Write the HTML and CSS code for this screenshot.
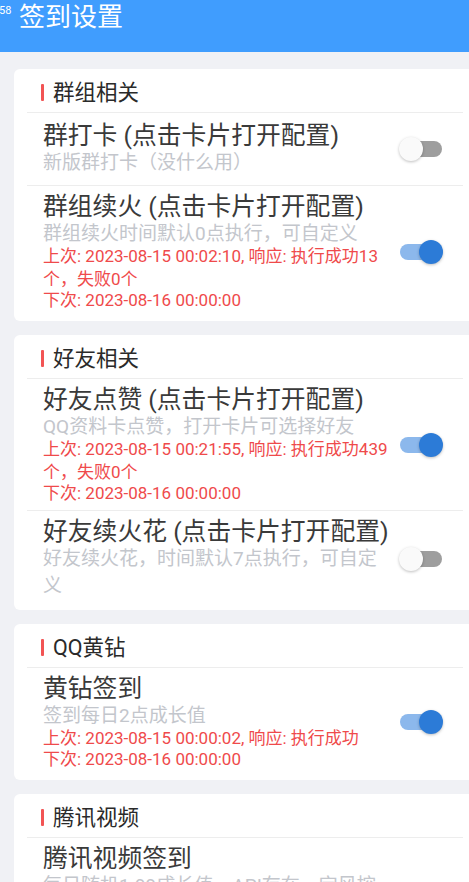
FILE: index.html
```html
<!DOCTYPE html>
<html lang="zh-CN">
<head>
<meta charset="utf-8">
<meta name="viewport" content="width=device-width, initial-scale=1">
<title>签到设置</title>
<link rel="stylesheet" href="styles.css">
</head>
<body>

<div class="topBar">
    <span class="clock">58</span>
    <h1 class="pageTitle">签到设置</h1>
</div>

<div class="page">

    <div class="card">
        <div class="cardHead"><span class="mark"></span>群组相关</div>

        <div class="item">
            <div class="itemText">
                <div class="itemTitle">群打卡 (点击卡片打开配置)</div>
                <div class="itemSub">新版群打卡（没什么用）</div>
            </div>
            <span class="switch"><span class="knob"></span></span>
        </div>

        <div class="item">
            <div class="itemText">
                <div class="itemTitle">群组续火 (点击卡片打开配置)</div>
                <div class="itemSub">群组续火时间默认0点执行，可自定义</div>
                <div class="itemLog">上次: 2023-08-15 00:02:10, 响应: 执行成功13个，失败0个</div>
                <div class="itemLog">下次: 2023-08-16 00:00:00</div>
            </div>
            <span class="switch on"><span class="knob"></span></span>
        </div>
    </div>

    <div class="card">
        <div class="cardHead"><span class="mark"></span>好友相关</div>

        <div class="item">
            <div class="itemText">
                <div class="itemTitle">好友点赞 (点击卡片打开配置)</div>
                <div class="itemSub">QQ资料卡点赞，打开卡片可选择好友</div>
                <div class="itemLog">上次: 2023-08-15 00:21:55, 响应: 执行成功439个，失败0个</div>
                <div class="itemLog">下次: 2023-08-16 00:00:00</div>
            </div>
            <span class="switch on"><span class="knob"></span></span>
        </div>

        <div class="item">
            <div class="itemText">
                <div class="itemTitle">好友续火花 (点击卡片打开配置)</div>
                <div class="itemSub">好友续火花，时间默认7点执行，可自定义</div>
            </div>
            <span class="switch"><span class="knob"></span></span>
        </div>
    </div>

    <div class="card">
        <div class="cardHead"><span class="mark"></span>QQ黄钻</div>

        <div class="item">
            <div class="itemText">
                <div class="itemTitle">黄钻签到</div>
                <div class="itemSub">签到每日2点成长值</div>
                <div class="itemLog">上次: 2023-08-15 00:00:02, 响应: 执行成功</div>
                <div class="itemLog">下次: 2023-08-16 00:00:00</div>
            </div>
            <span class="switch on"><span class="knob"></span></span>
        </div>
    </div>

    <div class="card">
        <div class="cardHead"><span class="mark"></span>腾讯视频</div>

        <div class="item">
            <div class="itemText">
                <div class="itemTitle">腾讯视频签到</div>
                <div class="itemSub">每日随机1-99成长值，API存在一定风控 可能会失败</div>
                <div class="itemLog">上次: 2023-08-15 00:00:05, 响应: 执行成功</div>
                <div class="itemLog">下次: 2023-08-16 00:00:00</div>
            </div>
            <span class="switch on"><span class="knob"></span></span>
        </div>
    </div>

</div>

</body>
</html>
```

FILE: styles.css
```css
html, body {
    margin: 0;
    overflow: hidden;
}

body {
    background-color: #f0f1f5;
    font-family: Roboto, "Noto Sans CJK SC", sans-serif;
    color: #333333;
}

.topBar {
    height: 52px;
    background-color: #409dfe;
    display: flex;
    align-items: flex-start;
}

.clock {
    font-size: 11px;
    color: white;
    margin: 4px 0 0 -1px;
    width: 20px;
}

.pageTitle {
    margin: 2px 0 0 0;
    font-size: 26px;
    line-height: 30px;
    font-weight: normal;
    color: white;
}

.page {
    padding: 17px 0 0 14px;
}

.card {
    background-color: white;
    border-radius: 6px;
    margin: 0 -7px 14px 0;
    padding: 0 13px 4px 13px;
}

.cardHead {
    display: flex;
    align-items: center;
    padding: 10px 0 6px 14px;
    font-size: 21.5px;
    line-height: 27px;
    color: #2a2a2a;
}

.mark {
    width: 3px;
    height: 17px;
    background-color: #f25454;
    border-radius: 1px;
    margin-right: 9px;
}

.item {
    display: flex;
    align-items: center;
    min-height: 73px;
    box-sizing: border-box;
    padding: 7px 21px 7px 16px;
    border-top: 1px solid #ededed;
}

.itemText {
    width: 347px;
}

.itemTitle {
    font-size: 24.8px;
    line-height: 27px;
    color: #3a3a3a;
    white-space: nowrap;
}

.itemSub {
    font-size: 19px;
    line-height: 27px;
    color: #c3c6cc;
}

.itemLog {
    font-size: 17px;
    line-height: 23px;
    margin: -2px 0;
    color: #ef4a4b;
}

.switch {
    position: relative;
    width: 42px;
    height: 16px;
    margin-left: auto;
    border-radius: 8px;
    background-color: #9e9e9e;
}

.knob {
    position: absolute;
    top: -4px;
    left: -1px;
    width: 24px;
    height: 24px;
    border-radius: 50%;
    background-color: #fafafa;
    box-shadow: 0 1px 3px rgba(0, 0, 0, 0.25);
}

.switch.on {
    background-color: #8cb8ec;
}

.switch.on .knob {
    left: auto;
    right: -1px;
    background-color: #2c7bd7;
}
```
